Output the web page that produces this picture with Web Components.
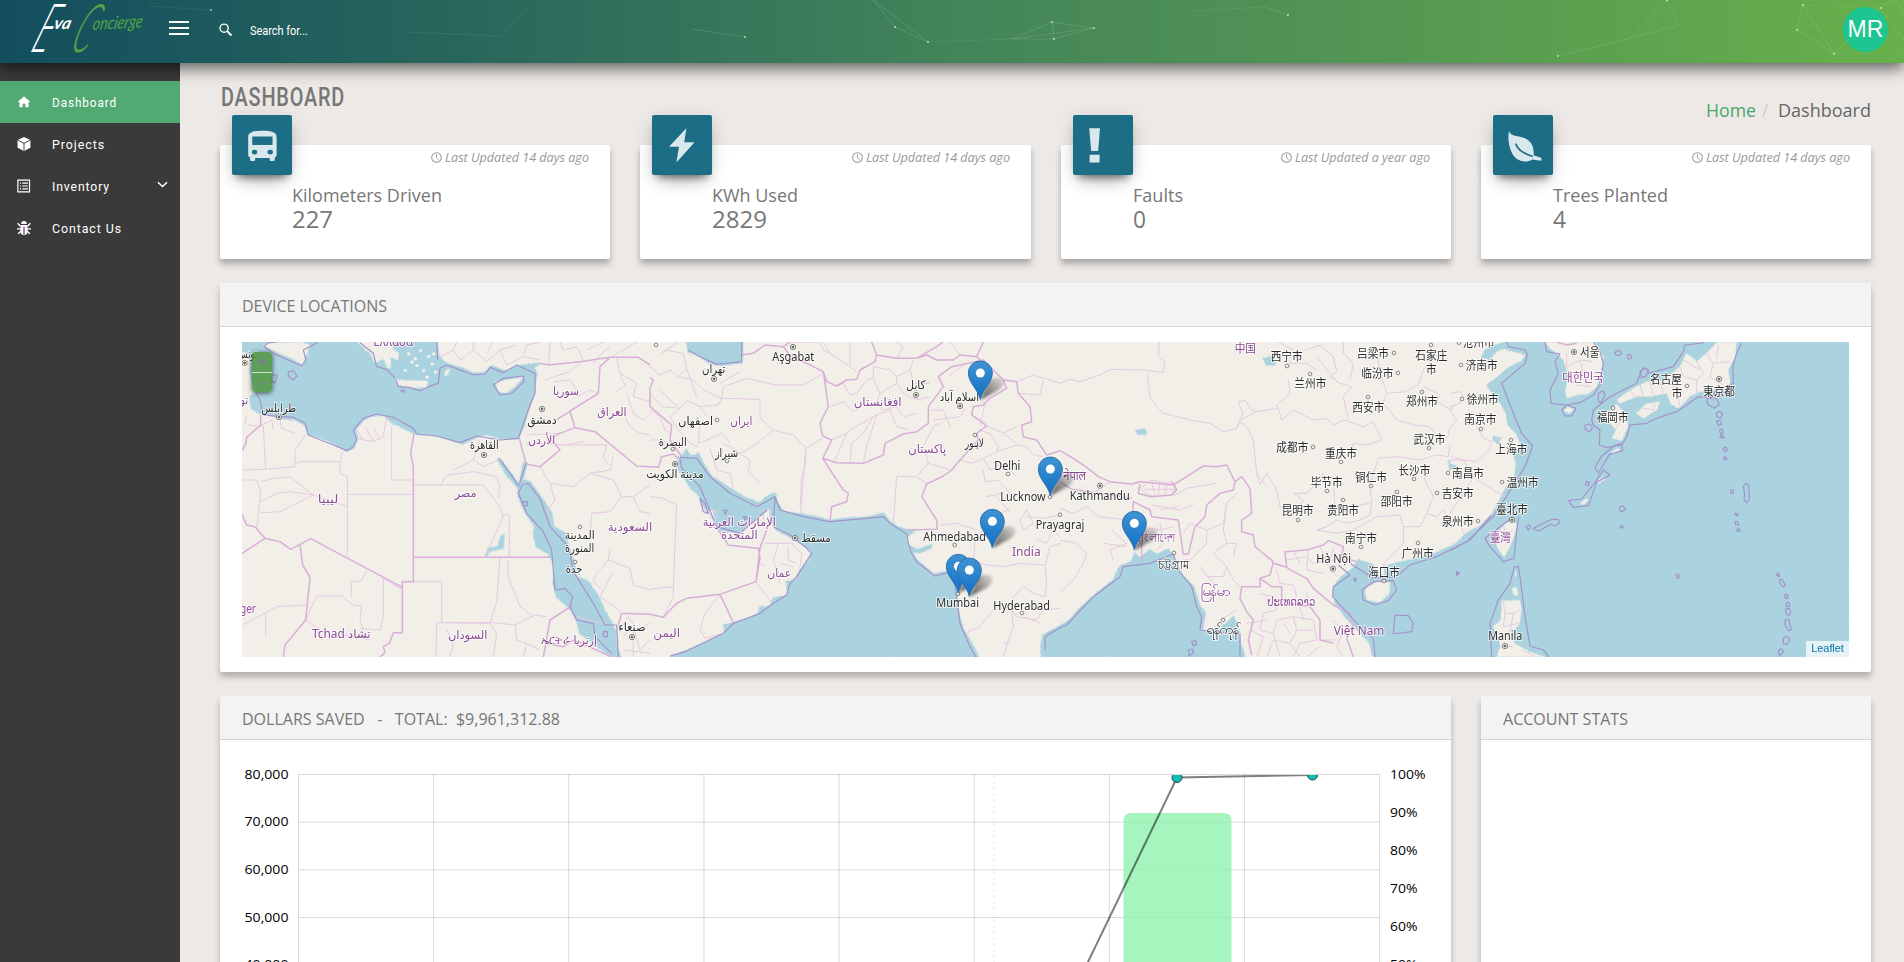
<!DOCTYPE html>
<html lang="en">
<head>
<meta charset="utf-8">
<title>Eva Concierge</title>
<style>
html,body{margin:0;padding:0;height:100%;overflow:hidden;background:#ece9e6;font-family:"Open Sans","Noto Sans",sans-serif}
</style>
</head>
<body>
<eva-app></eva-app>
<script>
const define = (name, css, html, init) => customElements.define(name, class extends HTMLElement {
  connectedCallback() {
    if (this.shadowRoot) return;
    const root = this.attachShadow({mode: 'open'});
    const h = typeof html === 'function' ? html(this) : html;
    root.innerHTML = '<style>' + css + '</style>' + h;
    if (init) init(this, root);
  }
});
const A = (el, n, d = '') => el.getAttribute(n) ?? d;

/* One line of text set to a fixed measure */
define('fit-text', ':host{display:block;flex:none}svg{display:block;overflow:visible}', el => {
  const w = +A(el, 'w'), s = +A(el, 's'), f = A(el, 'f', 'Open Sans');
  return `<svg width="${w}" height="${Math.round(s * 1.2)}"><text x="0" y="${Math.round(s)}" textLength="${w}" lengthAdjust="spacingAndGlyphs" fill="currentColor" style="font:${A(el, 'st')} ${A(el, 'wt', '400')} ${s}px '${f}',sans-serif;letter-spacing:${A(el, 'ls', '0')}px;white-space:pre">${A(el, 't')}</text></svg>`;
});

const ICONS = {
  home: '<path d="M12 2 1 12h3.2v9h5.6v-6.2h4.4V21h5.6v-9H23z"/>',
  cube: '<path d="M12 0 23 5v13.500L12 24 1 18.500V5z"/><path d="M1.500 5.500 12 10.800l10.500-5.300M12 10.800V23.500" stroke="#3a3a3a" stroke-width="1.600" fill="none"/>',
  list: '<path d="M1.500 2h20v20h-20z" fill="none" stroke="currentColor" stroke-width="2"/><path d="M5 6h2v2H5zm4 0h10v2H9zM5 11h2v2H5zm4 0h10v2H9zM5 16h2v2H5zm4 0h10v2H9z"/>',
  bug: '<path d="M7 5a5 5 0 0 1 10 0z"/><path d="M6 7h12v11a6 6 0 0 1-12 0z"/><path d="M1 4l5 5M23 4l-5 5M0 13.500h24M2 22l5-5M22 22l-5-5" stroke="currentColor" stroke-width="2.500" fill="none"/><path d="M12 10v13" stroke="#8b3f8e" stroke-width="2.200"/>',
  bus: '<g transform="translate(-1.600 0) scale(1.160 1.040)"><path d="M5 1.500C7 .3 17 .3 19 1.500c2.300 1 2.800 2 2.800 4v14c0 .9-.8 1.500-1.300 1.600V23c0 1.200-3.500 1.200-3.500 0v-1.500H7V23c0 1.200-3.500 1.200-3.500 0v-1.900c-.5-.1-1.300-.7-1.300-1.600v-14c0-2 .5-3 2.800-4z"/><path d="M5 5h14v6.500H5z" fill="#1c6e87"/><circle cx="6.600" cy="17" r="1.900" fill="#1c6e87"/><circle cx="17.400" cy="17" r="1.900" fill="#1c6e87"/></g>',
  bolt: '<path d="M15.500-1.500 1.600 13.300h8L7.500 26 22 9.800h-8.200z"/>',
  bang: '<path d="M1-1.500h8.600l-1.500 18.300H2.500z"/><path d="M1.300 19.800h8v6.200h-8z"/>',
  leaf: '<g transform="translate(-.9 0) scale(1.090)"><path d="M1.500 1c1.500 3.500 5 3.200 10 4.500 6 1.700 8.500 6 8.200 13l5.300 1.800c.6.300.6 2-.2 2.300l-6.100-.9c-5 3-11.700 1.300-14.700-4.200C1.500 12.500.5 6.500 1.500 1z"/><path d="M6.500 10c2 5.500 7 7.500 12.500 9.500" fill="none" stroke="#1c6e87" stroke-width="1.200"/></g>',
  clock: '<circle cx="12" cy="12" r="10.500" fill="none" stroke="currentColor" stroke-width="2.200"/><path d="M12 5v7.500l4.500 4" fill="none" stroke="currentColor" stroke-width="2"/>',
  search: '<circle cx="9.500" cy="9.500" r="7.500" fill="none" stroke="currentColor" stroke-width="2.600"/><path d="M15 15l8 8" stroke="currentColor" stroke-width="3.600"/>',
  down: '<path d="M2 7l10 9.500L22 7" fill="none" stroke="currentColor" stroke-width="3.200"/>'
};
define('ui-icon', ':host{display:block;flex:none}svg{display:block;overflow:visible}', el =>
  `<svg width="${A(el, 's')}" height="${A(el, 's')}" viewBox="0 0 24 24" fill="currentColor">${ICONS[A(el, 'n')]}</svg>`);

/* Header */
define('brand-logo', ':host{display:block;width:139px;height:63px;flex:none}svg{display:block;overflow:visible}text{font-family:Lato,sans-serif;font-style:italic}', `
<svg width="139" height="63">
 <g fill="#fff">
  <text transform="translate(29 52) skewX(-23)" textLength="17" lengthAdjust="spacingAndGlyphs" font-size="68" style="font-weight:300">E</text>
  <text transform="translate(53 29) skewX(-14)" textLength="17" lengthAdjust="spacingAndGlyphs" font-size="17" style="font-weight:700">va</text>
 </g>
 <g fill="#54a447">
  <text transform="translate(68 52) skewX(-23)" textLength="19" lengthAdjust="spacingAndGlyphs" font-size="67" style="font-weight:300">C</text>
  <text transform="translate(92 30) rotate(-3) skewX(-12)" textLength="50" lengthAdjust="spacingAndGlyphs" font-size="18">oncierge</text>
 </g>
</svg>`);
define('user-avatar', ':host{display:flex;width:45px;height:45px;border-radius:50%;background:#1dc690;align-items:center;justify-content:center;color:#fff;font:23px "Liberation Sans",sans-serif;margin:7px 16px 11px auto;flex:none;position:relative}', '<slot></slot>');
define('app-header', `
:host{display:block;height:63px;position:relative;z-index:5;background:linear-gradient(90deg,#134e5e,#26645c 22%,#43845a 50%,#589b51 78%,#68b04b);box-shadow:0 5px 15px rgba(0,0,0,.62)}
.mesh{position:absolute;inset:0;display:block}
.bar{display:flex;height:63px;color:#fff;position:relative}
.burger{width:20px;height:14px;margin:21px 30px 0;display:flex;flex-direction:column;justify-content:space-between}
.burger i{display:block;height:2px;background:#fff}
ui-icon{margin-top:23px}
.q{margin:21px 0 0 18px}`, `
<svg class="mesh" width="1904" height="63" fill="none" stroke="#c8efc0" stroke-opacity=".22" stroke-width=".7">
<path stroke-opacity=".12" d="M148 6l63 4M408 32l93 4 29-29M928 42l84-3M1191 11l74-4M1797 30l98-30M1803 5l78 3M1834 54l70-1"/>
<path d="M691 29l54 8M873 0l22 27 33 15M873 0l55 42M1012 39l40-17 42 6-40 11-2-17M1054 39h-42l82-11M1265 7l23 8M1558 56l73-18 48-13-12-25-36 38M1803 5l-6 25 37.500 24L1803 5M1895 0l9 12M1880 8l-46 46M1880 8l13-8M1880 8l24 32"/>
<g fill="#e4f6dd" fill-opacity=".7" stroke="none"><circle cx="211" cy="10" r="1"/><circle cx="745" cy="37" r="1"/><circle cx="895" cy="27" r="1"/><circle cx="928" cy="42" r="1"/><circle cx="1052" cy="22" r="1"/><circle cx="1094" cy="28" r="1"/><circle cx="1054" cy="39" r="1"/><circle cx="1288" cy="15" r="1"/><circle cx="1558" cy="56" r="1"/><circle cx="1667" cy="0" r="1.200"/><circle cx="1803" cy="5" r="1"/><circle cx="1797" cy="30" r="1"/><circle cx="1834" cy="54" r="1"/><circle cx="1881" cy="8" r="1"/></g></svg>
<div class="bar"><brand-logo></brand-logo><div class="burger"><i></i><i></i><i></i></div>
<ui-icon n="search" s="13"></ui-icon><fit-text class="q" w="58" s="13.500" f="Roboto" t="Search for..."></fit-text>
<user-avatar>MR</user-avatar></div>`);

/* Sidebar */
define('nav-item', `
:host{display:flex;height:42px;align-items:center;color:#fff;padding-left:17px}
:host([active]){background:#52a972}
fit-text{margin:-2px auto 0 21px}
.a{margin:-4px 12px 0 0}`, el =>
  `<ui-icon n="${A(el, 'n')}" s="14"></ui-icon><fit-text w="${A(el, 'w')}" s="13.500" f="Roboto" ls="1" t="${A(el, 't')}"></fit-text>` + (el.hasAttribute('more') ? '<ui-icon class="a" n="down" s="11"></ui-icon>' : ''));
define('side-bar', ':host{display:block;width:180px;background:#3a3a3a;padding-top:18px;box-sizing:border-box;flex:none}', `
<nav-item active n="home" w="65" t="Dashboard"></nav-item>
<nav-item n="cube" w="53" t="Projects"></nav-item>
<nav-item more n="list" w="58" t="Inventory"></nav-item>
<nav-item n="bug" w="70" t="Contact Us"></nav-item>`);

/* Cards */
define('stat-card', `
:host{display:block;flex:1;height:114px;background:#fff;border-radius:2px;box-shadow:0 5px 6px rgba(0,0,0,.28);position:relative;color:#777}
.ic{position:absolute;left:12px;top:-30px;width:60px;height:60px;border-radius:2px;background:#1c6e87;color:#d9e8ec;display:flex;align-items:center;justify-content:center;box-shadow:0 12px 20px -10px rgba(0,0,0,.28),0 4px 20px rgba(0,0,0,.12),0 7px 8px -5px rgba(0,0,0,.5)}
.up{display:flex;justify-content:flex-end;gap:3px;padding:5px 21px 0 0;color:#999;height:15px}
.up ui-icon{margin-top:2px}
.t{margin:19px 0 0 72px}.v{margin:-1px 0 0 72px}`, el => `
<div class="ic"><ui-icon n="${A(el, 'n')}" s="30"></ui-icon></div>
<div class="up"><ui-icon n="clock" s="11"></ui-icon><fit-text w="${A(el, 'uw')}" s="12" st="italic" t="${A(el, 'u')}"></fit-text></div>
<fit-text class="t" w="${A(el, 'tw')}" s="18" t="${A(el, 't')}"></fit-text>
<fit-text class="v" w="${A(el, 'vw')}" s="23" t="${A(el, 'v')}"></fit-text>`);
define('panel-card', `
:host{display:block;background:#fff;border-radius:2px;box-shadow:0 5px 6px rgba(0,0,0,.25);color:#777}
.h{height:43px;background:#f3f3f3;border-bottom:1px solid #d3d4d5;border-radius:2px 2px 0 0}
.h fit-text{padding:13px 0 0 22px}`, el => `
<div class="h"><fit-text w="${A(el, 'w')}" s="16" t="${A(el, 't')}"></fit-text></div><slot></slot>`);

/* Map: four drawing groups side by side, three units to a pixel */
const SEA = [
 [0,'M6,36V62L40,75 30,120 38,160 48,190 30,200 35,235 60,250 100,258 125,265 165,268 195,285 205,312 250,325 290,345 320,362 340,355 352,325 345,300 365,275 390,258 430,254 460,280 500,298 530,312 590,316 650,335 668,342 700,325 740,312 780,325 835,325 850,290 865,240 880,195 890,130 880,112 900,100 835,108 800,125 755,108 735,128 700,130 670,115 640,108 610,95 595,75 590,36 455,36 462,55 480,70 475,95 455,85 455,115 440,118 430,90 405,100 390,70 365,50 362,36Z'],
 [0,'M772,385L790,400 838,466 850,400 860,400 848,450 870,455 905,505 935,550 940,590 975,610 985,650 1000,690 1010,740 1045,755 1075,800 1095,845 1110,870 1125,900 1130,950 1142,981H1120L1060,940 1020,910 1010,870 990,835 950,800 940,760 945,710 925,670 890,650 880,610 885,590 855,545 835,500V475L800,435Z'],
 [0,'M735,682L745,655 775,650 785,615 792,615 788,655 750,662Z'],
 [1230,'M85,385L95,378 110,360 120,380 145,370 165,410 185,440 240,475 280,500 330,520 350,500 375,490 380,515 400,545 450,552 500,560 540,572 590,565 650,562 700,550 715,570 740,590 770,600 795,600 765,625 775,645 800,660 845,645 840,655 810,668 785,665 800,690 850,733 890,725 900,700 912,745 918,790 922,840 940,900 965,940 985,981H60L100,965 150,945 225,910 222,885 250,880 300,865 325,850 330,832 360,830 370,805 415,795 410,755 440,750 450,720 480,690 485,665 455,640 420,620 380,600 365,570 360,530 345,545 310,570 270,605 220,605 200,590 195,565 190,530 175,545 160,530 150,500 120,470 100,440 85,415Z'],
 [1230,'M110,36L115,65 145,75 180,100 215,105 275,98 278,36Z'],
 [2460,'M-55,981L-58,950 -50,915 0,888 30,870 60,835 110,790 160,750 180,710 215,695 225,670 240,685 270,660 290,675 325,658 345,690 365,735 400,770 420,830 435,850 430,880 425,905 470,895 500,880 520,860 535,890 540,940 555,981Z'],
 [2460,'M940,981L930,940 895,900 860,865 825,815 820,775 840,745 880,715 895,690 940,705 950,735 975,740 975,710 1010,700 1080,685 1140,665 1190,640 1220,610 1260,590 1295,555 1320,510 1335,480 1365,440 1370,400 1360,370 1385,345 1370,310 1345,285 1340,250 1320,215 1295,185 1280,165 1310,145 1345,115 1385,95 1400,75 1370,65 1330,55 1310,62 1290,85 1265,82 1275,62 1300,50 1335,36H2367V981Z'],
 [2460,'M610,85L640,80 645,102 620,105ZM228,302L255,298 258,312 235,312ZM1165,390L1172,405 1190,410 1170,418Z'],
 [3630,'M130,320L150,325 145,340 132,332Z']
];
const LAND = [
 [0,'M70,45L100,38 185,36 210,45 188,105 160,88 100,62ZM468,150L565,152 560,175 500,170 472,165ZM765,155L790,152 850,140 830,165 800,190 775,185ZM612,125L630,115 625,135 615,138ZM350,36L455,36 458,60 445,118 430,85 405,100 390,70Z'],
 [2460,'M915,775L950,755 990,755 988,790 960,817 920,810Z'],
 [3630,'M285,36L435,36 460,80 455,130 440,170 415,192 380,195 350,205 345,180 355,140 340,90 320,70 300,55ZM340,242L355,230 372,238 358,250ZM480,240L500,222 528,255 535,290 515,332 485,325 498,300 482,282 462,258ZM500,210L540,180 590,155 640,150 690,110 708,70 725,80 740,95 780,60 800,36H860L855,80 835,120 842,165 815,185 785,180 750,185 720,200 685,235 662,222 650,190 600,200 560,200 510,220ZM558,250L590,220 630,215 622,238 580,265ZM190,565L202,590 185,640 162,683 140,650 135,620 160,585ZM155,812L210,810 215,840 208,885 180,912 195,940 240,965 285,981H140L150,950 145,920 128,890 152,870Z'],
 [3630,'M485,365l20,-12 5,8 -20,12ZM440,455l22,-15 3,8 -18,12ZM390,520l20,-15 5,8 -15,12ZM195,720l5,15 -5,5ZM185,775l15,-5 5,25 -12,3Z']
];
/* maritime limits */
const LIM = [
 [0,'M72,50L100,70 185,108 198,90 190,60 235,36M72,50L85,38 110,36M48,190L60,210 70,255 160,262 195,280 205,315 280,345 320,362 340,350 350,328 340,300 370,265 410,252 460,262 520,295 530,312 590,318 660,338 710,318 780,330 835,325 870,225 885,190 885,130 830,105 790,128 750,112 735,132 700,135 655,118 620,105 600,115 595,160 565,170 540,182 505,172 475,170 468,150M360,38L400,70 410,110 440,118 465,145M590,36L593,90M760,165L790,145 850,138 852,155 815,190 780,195ZM145,125L160,123 172,138 158,150 145,138ZM95,135L112,135 105,160 90,150ZM483,180h10v6h-8ZM848,462L835,490 860,550 910,605 935,660 945,780 975,775 998,800 990,830 1010,870 1060,880 1065,920 1115,970M850,462L865,460 900,505 930,590 985,650 1000,725 1060,820 1095,885 1130,885 1135,981M850,515h12v12h-12ZM1090,905h12v15h-12ZM838,462L858,400M778,385L838,470'],
 [1230,'M90,382L140,385 180,440 240,490 320,530 375,500 390,540 460,560 540,575 650,565 700,560 720,580 770,612 775,640 785,670 800,695 855,738 895,728 915,760 930,880 960,950 978,981M375,500L370,590 420,615 465,650 485,670 440,740 420,760 410,795 370,820 330,850 250,880 220,910 105,965 60,978M150,505L165,520 175,550 160,545ZM220,540h12l-6,12ZM280,560h12l-6,10ZM115,60L145,78 200,103 275,95 275,36M90,385L95,415 150,470 200,590 270,610 350,540'],
 [2460,'M-45,960L-45,920 0,893 20,885 100,800 180,740 190,710 270,700 340,672 355,720 395,770 410,830 425,860 420,900 540,912 540,981M835,705L870,735 820,770 818,800 900,890 940,925 945,981M905,780L940,755 1000,752 1010,780 985,812 945,825 910,810ZM870,700L940,745 1010,740 1050,705 1130,680 1230,630 1295,555M1005,855L1045,857 1060,880 1055,905 1000,912ZM395,935l12,-3 3,12 -10,3ZM385,960l12,-3 3,12 -12,8ZM880,745h10l-5,10ZM1190,725l8,4 -6,6Z'],
 [3630,'M170,36L175,50 225,60 232,75 225,100 155,160 190,250 215,310 248,348 225,410 175,490 130,560 50,635 0,662M285,36L290,65 330,72 315,95 325,130 300,180 303,220 350,225 390,218 430,195 450,165 460,100 450,65 430,36M335,240L350,225 378,235 365,258 345,258ZM425,270L430,240 480,200 560,160 575,120 590,115 595,130 670,110 700,65 705,45 750,40 765,36M425,270L430,285 450,300 448,345 470,353 515,345 530,320 540,285 590,280 620,265 680,245 745,200 785,205 795,185 850,160 848,110 860,70 875,40M445,190l15,-8 5,12 -12,25 -8,-5ZM405,285l15,-3 8,12 -10,12 -12,-8ZM515,340l3,22 -40,12 -32,55 -12,-15 20,-35 40,-32ZM460,420l20,15 -40,22 -25,70 -45,5 -15,-20 40,-5 40,-50ZM408,455l10,2 -2,10 -10,-2ZM510,530l10,-2 6,10 -10,8 -8,-6ZM510,594l5,-9 5,8ZM190,560L105,625 120,650 160,695 192,685 200,600 207,560M228,590l8,-6 6,8 -8,8ZM250,595l30,-15 25,-12 20,0 3,12 -15,8 -10,-5 -38,20 -12,-5ZM193,710L205,710 210,740 225,860 240,948 280,960 297,981M193,710L180,760 145,810 120,880 125,981M770,210l8,-10 20,5 10,18 -15,12 -18,-10ZM800,248l10,-4 8,8 -6,12 -12,-4ZM800,272l10,0 5,10 -10,5ZM808,300l8,-4 4,12 -8,4ZM810,322l6,-8 6,10ZM820,355l8,-4 4,10 -8,5ZM820,387l5,-8 6,10ZM842,480l8,0 0,10 -8,0ZM880,470l8,-10 8,6 2,42 -8,10 -8,-8 2,-18ZM855,550l10,2 -5,6ZM855,575l8,0 4,10 -10,0ZM860,602l5,-8 5,10ZM978,735l8,-6 3,10ZM988,750l8,-2 10,18 -6,5 -10,-10ZM1003,795l8,-2 4,10 -8,3ZM1008,820l8,-4 3,12 -10,2ZM1007,838l10,-4 5,12 -4,10 -10,-4ZM1005,870l12,-2 3,20 6,10 -10,4 -10,-14ZM1000,925l10,-6 10,8 -8,16 -12,-2ZM985,962l8,-6 8,8 -12,14ZM677,735l7,-3 6,8 -8,5ZM18,727l9,2 -6,7ZM497,65l12,-5 6,10 -10,8 -10,-6ZM532,75l8,-2 6,10 -10,5ZM570,125l12,-12 14,8 -8,18 -14,4Z']
];
const BORDER = [
 [0,'M6,362L18,340 20,322 62,285V255M522,310L512,370 520,410V755H487V908H460L448,940 430,950 435,968 420,981M522,682H930M6,552L20,585 45,590 75,625 6,670M75,625L120,635 152,658 212,626 487,772M180,645L188,705 210,742 197,870 135,945 130,981M838,325L858,402 900,410 960,360 930,325 960,310 1005,293 990,245 950,268M900,100L925,105 1020,95 1110,82 1195,82 1230,105M1110,82L1080,110 1075,190 990,243 1005,293 1065,305 1190,408 1230,410M910,981L930,870 1000,825M915,940L970,950 1000,930 1070,960 1115,981M1145,850L1230,853M1145,850L1135,885'],
 [1230,'M0,143L10,150 0,175 0,230 65,285 60,330 95,380M0,410L25,412 35,380 70,372 85,385M275,75L310,70 345,45 400,50 420,36M400,50L420,75 520,125 530,155 560,168 590,150 620,148 630,120 675,95 680,75 740,85 800,85 830,75 860,90 910,90 930,75 980,80 1000,100M520,125L535,230 510,280 518,318 545,330 518,385 580,480 595,490 590,515 545,530 540,572M518,385L560,398 640,400 700,375 705,340 760,312 800,305 835,280 835,230 880,170 865,140 905,110 1000,90 1060,150 1070,175 1020,205 1000,225 970,230 965,255 1010,288 980,310 985,330 930,390 905,420 880,438 830,462 815,500 860,570 862,598 770,600M1060,150L1100,155 1105,190 1140,230 1145,275 1115,285 1120,320 1160,330 1190,375 1230,362M680,75L665,36M800,85L860,50 880,36M980,80L1000,36M0,853L40,862 80,820 110,805 210,793 318,755 330,685 325,655 235,645 205,600M210,793L250,878M318,755L330,655 350,600'],
 [2460,'M0,362L40,385 80,412 115,440 150,455 215,462 240,455 340,465 380,440 430,408 470,410 500,405 525,455 520,480 480,490 440,525 435,560 405,590 385,672 370,672 360,605 355,570 275,560 270,540 220,515 218,550 245,580 245,695M525,455L545,440 570,475 575,550 545,570 545,605 580,615 585,650 640,695 630,735 600,745 600,770 545,770 540,805 560,845 580,870 565,930 575,975M640,700L680,712 675,665 740,660 790,645 805,632 850,650 845,680 890,695M680,712L700,725 740,745 760,775 820,825 870,850 880,890 860,925 880,981M600,745L635,770 665,770 665,825 700,820 750,830 780,870 780,930 820,940M240,462L235,490 270,500 335,495 350,480 335,455M0,455L35,478 215,505'],
 [3630,'M320,36L350,45 380,40']
];
const STATE = [
 [0,'M6,450L50,450M50,450L62,485 50,600 75,625M6,420L77,418 70,290 25,285M77,418L165,410 165,360 200,310M165,400L180,395 300,395 308,365M300,395L300,430 322,440V680M322,493H520M322,530L220,495 120,545 65,548M62,515L110,490 150,485 220,495 150,440 100,445 62,455M455,290V450H520M524,465H730L780,530 790,560 735,680M808,682V555H783M602,465L620,435 700,425 770,440 780,470 775,505M640,420L700,390 720,330M700,390L730,410 775,390M345,320L370,330 400,335 430,320 440,255M370,330L350,300M400,335L375,290M420,330L400,290M780,682L770,815 750,880 590,878 588,981M520,755H605V875M602,878H760L825,885 885,855 920,860M803,690L805,740 840,830 880,860M487,780L430,745V860L420,900M6,885L77,848 110,830 197,825M77,848V920M197,870L240,900 245,930M197,870L230,798H305L340,825 365,828 360,870 370,900M333,800L335,755 365,752 380,720M360,895L420,900M270,930L285,910 390,930M860,345L910,340 975,345 1100,345 1090,380 1105,405M860,315L960,310M975,345L1030,335M900,410L930,460 1000,470 1050,430 1110,420 1120,380M1050,430L1120,450 1145,500 1180,500 1230,465M1145,500L1110,545 1055,550 1050,610M930,460L945,510 920,545 940,575M1180,500L1200,545 1230,550M1110,660L1105,690 1070,730 1060,755 1085,780M1105,690L1170,715 1180,765 1230,780M1120,725L1080,800 1130,835 1145,850M915,150L990,125 1020,100M1010,180L990,150 940,155M1075,190L1050,180 1010,200M1140,135L1155,165 1130,185M1160,190L1180,250 1210,270 1230,250M1130,85L1140,130 1190,160 1180,200 1230,215M1150,250L1170,290 1200,310 1230,315M600,80L640,60 660,90 700,60 740,95 780,60 800,105 850,80 900,90M640,60L650,36M700,60L700,36M740,70L760,36M850,80L860,45 900,36M780,60L830,45M930,36L925,105M960,36L970,60 1010,50 1030,90M1040,60L1090,36M1110,82L1150,60 1190,36M1060,100L1085,70 1110,50M620,900L640,940 630,981M750,880L770,910 760,981M825,885L830,930 860,940 850,981M860,940L900,960M1010,860L1040,870 1100,880M1145,890L1165,860 1190,900 1230,880M1150,920L1180,890 1200,960 1230,930M1150,960L1230,970M1180,890V981M20,255L15,285M65,285L95,270 100,300M120,265L125,295 165,310'],
 [1230,'M45,60L100,70 110,115 85,140 60,120 30,135 0,110M85,140L130,150 160,180 215,205 330,208V265L370,300 345,320 300,355 270,370 240,350 215,340M215,205L220,170 290,145 375,165 460,165 520,130M210,160L270,125M370,300L430,315 467,355 452,552M467,355L518,325M467,355V400L455,440 450,530M110,210L90,235 35,230 0,190M110,210L150,230 205,225 215,205M150,270L145,340 170,330 215,310 240,340M180,355L200,420 240,430 250,475M270,370L300,390 295,425 330,460M150,230L170,260M85,300L60,260 90,235M85,300L120,340 145,350M0,330L40,330 60,355M110,115L140,200M30,180L60,210 85,230M35,70L85,36M420,36L510,36L520,60 540,70 600,110 620,125M545,330L590,310 600,300 670,260 680,255 650,350 640,400M590,310L555,390M670,260L640,310 605,340 600,398M680,255L720,240 740,290 780,300M540,230L580,215 610,245 625,235M560,168L580,160 600,195 620,190M620,190L650,150 670,145 690,190 740,160 760,190M670,145L670,110 720,120 740,140 780,120 790,160 840,160M740,160L740,140M700,240L740,230 760,260 800,250M760,190L800,210 840,200M780,120L790,90M690,190L680,220 700,240M840,240L880,240 900,290M850,270L930,260 945,235M835,400L905,420M835,400L820,350 850,290 870,280M835,400L800,440 740,440 730,580M800,440L830,462M930,390L965,400 1000,385 1040,365 1100,345 1130,350 1150,375 1180,380M1000,420L1005,455 1045,450 1080,490 1100,490M1000,385L1020,420 1060,400 1100,440M1040,365L1045,350 1020,310 985,300M1010,288L1060,310 1100,340M965,255L1010,280M1060,310L1100,290M1005,220L990,290M1040,500L1075,540 1020,560 1000,600 975,640 970,690 1010,705 1060,710 1110,700 1185,705 1190,760 1185,800M870,585L920,580 980,600M1080,550L1075,540M1120,600L1110,570 1130,540 1150,580 1120,600M1130,560L1180,565 1230,555M1160,630L1190,640 1210,600 1230,620M1185,705L1200,650 1230,640M1185,800L1150,790 1120,770 1090,800 1085,840 1100,860M1030,840L1005,870 990,890 955,905 950,930M1085,840L1090,890 1075,930 1060,981M1100,860L1160,870 1180,840 1230,835M1120,860L1170,880M1060,940L1080,940M970,700L920,740M0,500L40,505 80,525 70,770 0,778M70,770L70,800 40,862M150,900L165,850 210,793M150,900L165,925 220,910M385,640L370,690 390,760M415,650L415,690 440,700M345,640L375,640 430,640M390,700L430,710M425,640L455,670 450,710M330,700L345,710M318,755L365,820M0,240L30,260 45,300 60,310M180,540h20v25h-18ZM340,540h20v40h-20ZM600,110L600,36M540,70L520,36M740,85L760,50 740,36M930,75L900,36M1100,155L1150,135 1230,160M1105,190L1170,195 1180,150M895,140L940,105M1010,500L1060,490'],
 [2460,'M0,160L30,148 60,155 120,135 150,118 250,120 310,128 315,95 295,80 298,36M262,130L270,205 310,250 400,272 450,280 490,305 530,295 540,275 560,290 580,330 590,430M530,295L548,250 535,215 555,210 575,240 590,245 655,235 650,225 690,190 685,150M540,270L590,245M655,235L665,270 700,240 760,270 800,265 820,285 850,270 910,290 940,275 965,330 920,345 880,340 870,380M840,160L875,170 850,200 865,270M655,36L700,60 690,70 690,100 740,100 770,120M735,60L780,45 820,80 830,125 810,140 840,160M770,80L830,155M850,36L850,70 880,100 870,150M950,60L960,130 980,190 970,220 1010,270 1060,285 1110,290 1140,330 1165,320M980,190L1035,185 1075,165 1090,120 1125,80M1090,170L1140,195 1130,215 1175,240 1180,225M1165,320L1165,300 1190,270 1170,240M940,430L955,385 1010,380 1080,390 1130,375 1165,380 1170,345M940,430L930,470 935,520 930,555 900,570 860,580 830,570 800,590 775,600M820,440L825,540 870,530 930,520M590,430L600,465 620,430 650,480 660,530 710,545 730,510 700,490 740,490 770,460 790,430M590,430L620,470M800,590L770,600 830,610 880,600 950,560 1020,555 1030,590 1080,590 1100,550 1130,560M1030,590L1030,640 980,690 960,720M1100,550L1120,500 1095,450 1090,400M1130,560L1150,540 1180,590M340,498L380,475 470,460M275,525L360,540 400,525M300,540L355,530M300,580L310,640 290,660M245,590L300,600 340,590M155,600L200,640 150,660 160,690M130,640L200,650M0,630L50,640 80,670 70,700 40,750 0,790M0,535L40,550 80,530 115,560 200,570 245,560M370,610L390,580 440,600 490,580 500,520 530,490M440,600L440,640 390,690 370,690M500,520L490,600 500,640 460,670 500,710 520,750 540,770M440,740L490,740 500,710M150,455L100,490 60,480M530,840L480,870M520,680L530,640 500,640M420,710L460,760M650,720L660,760 700,765 710,800M680,690L740,680 760,700 820,690M700,665L720,700M745,660L740,720 790,730M780,650L800,700 830,740M820,655L810,690M600,790L640,800 650,840 610,850 600,900 640,910 650,870 700,860 710,900 690,940 640,930 620,981M560,880L620,870M640,910L660,981M700,860L760,870 770,930 720,940 700,981M690,940L720,981M760,900L710,900M570,900L610,920 590,981M780,950L740,981M820,870L850,900 830,950 850,981M780,930L830,930M670,880L690,910M740,790L750,830M720,830L730,870'],
 [2460,'M255,465q15,-20 35,-12t40,5q25,5 12,25t-30,12q-30,10 -55,-5t-2,-25ZM275,455L285,495M300,455L295,495M320,460L315,495M255,478H345'],
 [3630,'M0,190L30,185 40,200M40,200L30,220 0,230M80,290L100,325 125,335 120,355 100,375 80,395 40,390 0,390M0,380L40,390 70,440 100,460 130,480 165,500M125,335L160,320M70,440L40,490 0,550M30,580L45,620M350,70L350,110 390,90 430,95M390,90L400,130 430,130M350,110L370,160M380,165L425,170M540,180L560,205M570,165L580,200M600,155L610,195M630,155L640,190M650,150L680,180 690,230M690,110L700,140 740,150 740,190M740,95L760,130 740,150M770,70L790,100 840,95M790,100L780,140 820,165M805,45L800,85M500,240L515,270 495,300M580,235L610,240 615,220M150,600L170,610 190,600M145,640L175,630M160,585L175,640M160,815L165,850 190,850 210,840M165,850L160,890 205,880M190,850L180,905M150,950L190,950M215,960L260,981M700,90L750,120']
];
const LABELS = [
 ['تونس',22,85,60,0],['تو',12,222,26,1],['طرابلس',116,245,104,0],['Ελλάδα',460,47,120,1],['ليبيا',264,520,62,1],['مصر',677,502,66,1],['القاهرة',733,358,86,0],['دمشق',906,282,88,0],['سوريا',978,195,78,1],['العراق',1116,257,88,1],['الأردن',905,342,82,1],['السعودية',1170,603,134,1],['المدينة',1019,628,90,0],['المنورة',1019,667,88,0],['جدة',1002,730,50,0],['ger',24,850,48,1],['Tchad تشاد',304,923,176,1],['السودان',683,926,118,1],['ኤርትራ إرتريا',987,942,168,1],['صنعاء',1176,904,82,0],['اليمن',1280,922,80,1],
 ['تهران',1421,130,70,0],['Aşgabat',1660,93,126,0],['اصفهان',1367,284,104,0],['ایران',1504,285,66,1],['البصرة',1298,347,84,0],['شیراز',1460,382,70,0],['مدينة الكويت',1305,445,172,0],['الإمارات العربية',1498,588,220,1],['المتحدة',1498,628,110,1],['مسقط',1728,636,88,0],['عمان',1618,740,72,1],['افغانستان',1913,227,144,1],['کابل',2028,178,58,0],['اسلام آباد',2158,212,118,0],['پاکستان',2062,370,114,1],['لاہور',2203,352,56,0],
 ['Delhi',2302,420,78,0],['Lucknow',2349,513,136,0],['Ahmedabad',2144,633,188,0],['Prayagraj',2460,598,146,0],['India',2359,678,86,1],['Mumbai',2153,831,128,0],['Hyderabad',2345,839,170,0],['नेपाल',2504,449,68,1],['Kathmandu',2579,510,180,0],['বাংলাদেশ',2746,636,122,1],['চট্টগ্রাম',2801,716,94,0],['မြန်မာ',2925,799,90,1],['ရန်ကုန်',2950,911,96,0],['ປະເທດລາວ',3154,829,144,1],['Hà Nội',3281,699,104,0],['Việt Nam',3357,916,152,1],
 ['中国',3016,69,64,1],['西宁市',3140,94,96,0],['兰州市',3211,174,96,0],['吕梁市',3399,84,96,0],['石家庄',3574,89,96,0],['市',3574,132,32,0],['临汾市',3412,144,96,0],['郑州市',3546,228,96,0],['西安市',3385,245,96,0],['武汉市',3568,342,96,0],['成都市',3157,367,96,0],['重庆市',3303,383,96,0],['毕节市',3260,470,96,0],['铜仁市',3393,455,96,0],['长沙市',3523,435,96,0],['邵阳市',3470,528,96,0],['昆明市',3173,556,96,0],['贵阳市',3309,554,96,0],['南宁市',3363,640,96,0],['广州市',3533,684,96,0],['海口市',3432,742,96,0],
 ['沧州市',3716,50,96,0],['济南市',3725,121,96,0],['徐州市',3728,221,96,0],['南京市',3721,283,96,0],['上海市',3814,373,96,0],['南昌市',3684,445,96,0],['吉安市',3653,505,96,0],['泉州市',3653,589,96,0],['温州市',3848,471,96,0],['臺北市',3816,551,96,0],['臺灣',3781,635,64,1],['서울',4049,81,58,0],['대한민국',4029,156,124,1],['名古屋',4278,162,96,0],['市',4311,205,32,0],['東京都',4437,197,96,0],['福岡市',4118,277,96,0],['Manila',3796,931,102,0]
];
const CAP = [[14,99],[117,261],[732,375],[906,237],[1176,921],[1422,147],[1659,51],[1305,402],[1665,624],[2028,195],[2160,228],[2580,467],[3279,716],[4002,66],[4437,147],[3816,570],[3795,948]];
const TOWN = [[1020,591],[1005,696],[1248,45],[1431,270],[1299,357],[1461,393],[2205,315],[2304,432],[2430,501],[2144,645],[2154,791],[2346,849],[2460,554],[2802,669],[2949,870],[3141,108],[3210,132],[3462,69],[3573,45],[3474,129],[3546,186],[3384,201],[3567,354],[3219,351],[3303,396],[3261,483],[3393,468],[3522,447],[3471,486],[3174,570],[3309,510],[3363,651],[3534,639],[3432,753],[3657,38],[3663,105],[3666,207],[3723,297],[3813,330],[3624,429],[3591,489],[3714,573],[3786,456],[4119,234],[4341,168]];
const PINS = [[2221,210],[2431,498],[2257,655],[2155,790],[2188,801],[2683,661]];
const ISLES = [[500,70],[520,85],[535,60],[560,78],[525,105],[545,120],[570,100],[580,125],[510,95],[555,140],[490,120],[575,70]];
const grp = (a, attr) => `<g ${attr}>` + a.map(([x, d]) => `<path transform="translate(${x} 0)" d="${d}"/>`).join('') + '</g>';
define('world-map', `
:host{display:block;position:relative;height:315px;margin:15px 22px 0;overflow:hidden}
svg{display:block}
.z{position:absolute;left:10px;top:10px;width:20px;height:40px;border-radius:4px;background:rgba(76,147,59,.82);box-shadow:0 1px 5px rgba(0,0,0,.65);display:flex;flex-direction:column;color:#82739b;font:17px/19px "Liberation Sans",sans-serif;text-align:center}
.z span{height:19px;flex:1}.z span+span{border-top:1px solid #d5e4d0}
.l{position:absolute;right:0;bottom:0;width:43px;height:16px;background:rgba(255,255,255,.7);color:#0078a8;font:11px/15px "Liberation Sans",sans-serif;text-align:center;letter-spacing:-.1px}`, () => `
<svg width="1607" height="315" viewBox="6 36 4821 945">
<defs>
<filter id="r" x="0" y="0" width="100%" height="100%"><feTurbulence type="fractalNoise" baseFrequency=".16" numOctaves="2" seed="4"/><feDisplacementMap in="SourceGraphic" scale="7" xChannelSelector="R" yChannelSelector="G"/></filter>
<linearGradient id="p" x1="0" y1="0" x2="0" y2="1"><stop offset="0" stop-color="#3f94d2"/><stop offset="1" stop-color="#126fc6"/></linearGradient>
<filter id="b" x="-30%" y="-30%" width="160%" height="160%"><feGaussianBlur stdDeviation="5"/></filter>
<linearGradient id="s" x1="0" y1="1" x2="1" y2="0"><stop offset="0" stop-color="#000" stop-opacity=".65"/><stop offset="1" stop-color="#000" stop-opacity=".08"/></linearGradient>
</defs>
<rect x="6" y="36" width="4821" height="945" fill="#f2efe9"/>
<g filter="url(#r)">${grp(SEA, 'fill="#aad3df" stroke="#aad3df" stroke-width="5"')}${grp(LAND, 'fill="#f2efe9"')}</g>
<g fill="#f2efe9">${ISLES.map(p => `<path d="M${p[0]},${p[1]}l8,-4 5,7 -9,4z"/>`).join('')}</g>
<g fill="none" stroke-linejoin="round">
${grp(STATE, 'stroke="#e4c9e2" stroke-width="3"')}
${grp(BORDER, 'stroke="#d9afd7" stroke-width="4.500"')}
${grp(LIM, 'stroke="#a493cb" stroke-width="3.600"')}
</g>
<g fill="#f5f2ec" stroke="#555" stroke-width="2">${TOWN.map(c => `<circle cx="${c[0]}" cy="${c[1]}" r="5.500"/>`).join('')}${CAP.map(c => `<circle cx="${c[0]}" cy="${c[1]}" r="8"/><circle cx="${c[0]}" cy="${c[1]}" r="3" fill="#555"/>`).join('')}</g>
<g font-size="36" text-anchor="middle" stroke="#fff" stroke-opacity=".75" stroke-width="6" paint-order="stroke" stroke-linejoin="round" style="font-family:'Noto Sans','DejaVu Sans','Noto Sans CJK SC',sans-serif">${LABELS.map(l => `<text x="${l[1]}" y="${l[2]}" textLength="${l[3]}" lengthAdjust="spacingAndGlyphs" fill="${l[4] ? '#8b4a94' : '#2b2b2b'}">${l[0]}</text>`).join('')}</g>
${PINS.map(([x, y]) => `<g transform="translate(${x} ${y})"><path d="M0,0L25,-60Q50,-72 68,-62 76,-45 52,-28Z" fill="url(#s)" filter="url(#b)"/></g>`).join('')}
${PINS.map(([x, y]) => `<g transform="translate(${x} ${y})"><path d="M0,-2C-8,-34 -36,-52 -36,-81A36,36 0 0 1 36,-81C36,-52 8,-34 0,-2Z" fill="url(#p)" stroke="#2d72ad" stroke-width="3"/><circle cx="0" cy="-81" r="13.500" fill="#fff"/></g>`).join('')}
</svg>
<div class="z"><span>+</span><span>-</span></div><div class="l">Leaflet</div>`);

/* Chart, in pixels from the top-left of the plot card body */
define('savings-chart', ':host{display:block;height:400px;overflow:hidden}svg{display:block}text{font-family:"Open Sans",sans-serif;font-size:13.500px;fill:#000}', () => {
  let g = '', t = '';
  for (let i = 0; i < 9; i++) {
    const x = 78.5 + i * 135.14, y = 34.5 + i * 47.68;
    g += `<path d="M${x} 34.500V400M78.500 ${y}H1159.500"/>`;
    t += `<text x="24.500" y="${y + 4}" textLength="44" lengthAdjust="spacingAndGlyphs">${80 - i * 10},000</text>`;
  }
  for (let i = 0; i < 10; i++) t += `<text x="1170" y="${34.5 + i * 38.14 + 4}" textLength="${i ? 27.5 : 35.5}" lengthAdjust="spacingAndGlyphs">${100 - i * 10}%</text>`;
  return `<svg width="1231" height="400"><defs><clipPath id="c"><path d="M78 35H1160V400H78z"/></clipPath></defs>
<g stroke="#000" stroke-opacity=".15" fill="none">${g}<path d="M774 35V400" stroke-dasharray="3 3" stroke-opacity=".09"/></g>
<path d="M903.500 400V81q0-8 8-8h92q8 0 8 8V400z" fill="#90f2ae" fill-opacity=".8"/>
<g clip-path="url(#c)"><path d="M957 37.500L1092.500 35M957 37.500L868 222 800 360" stroke="#000" stroke-opacity=".5" stroke-width="2" fill="none"/>
<g fill="#0bbfb2" stroke="#1d4340" stroke-width="1"><circle cx="957" cy="37.500" r="5"/><circle cx="1092.500" cy="35" r="5"/></g></g>${t}</svg>`;
});

define('page-head', `
:host{display:flex;height:82px;color:#777}
.t{margin:18px auto 0 1px}
.b{display:flex;margin-top:36px;color:#666}
.h{color:#4aa76d}.s{color:#ccc;margin:0 10px 0 6px}`, `
<fit-text class="t" w="124" s="25" wt="500" f="Roboto" ls="1" t="DASHBOARD"></fit-text>
<div class="b"><fit-text class="h" w="50" s="18" t="Home"></fit-text><fit-text class="s" w="6" s="18" t="/"></fit-text><fit-text w="93" s="18" t="Dashboard"></fit-text></div>`);

define('eva-app', `
:host{display:flex;flex-direction:column;height:962px;overflow:hidden}
.body{display:flex;height:899px}
main{flex:1;padding:0 33px 0 40px}
.row{display:flex;gap:30px}
panel-card{margin-top:24px}
.map{height:389px}.chart{width:1231px;flex:none}.acc{flex:1}`, `
<app-header></app-header>
<div class="body"><side-bar></side-bar><main>
<page-head></page-head>
<div class="row">
<stat-card n="bus" t="Kilometers Driven" tw="150" v="227" vw="41" u="Last Updated 14 days ago" uw="144"></stat-card>
<stat-card n="bolt" t="KWh Used" tw="86" v="2829" vw="55" u="Last Updated 14 days ago" uw="144"></stat-card>
<stat-card n="bang" t="Faults" tw="50" v="0" vw="13" u="Last Updated a year ago" uw="135"></stat-card>
<stat-card n="leaf" t="Trees Planted" tw="115" v="4" vw="13" u="Last Updated 14 days ago" uw="144"></stat-card>
</div>
<panel-card class="map" t="DEVICE LOCATIONS" w="145"><world-map></world-map></panel-card>
<div class="row"><panel-card class="chart" t="DOLLARS SAVED &nbsp; - &nbsp; TOTAL: &nbsp;$9,961,312.88" w="318"><savings-chart></savings-chart></panel-card>
<panel-card class="acc" t="ACCOUNT STATS" w="125"></panel-card></div>
</main></div>`);
</script>
</body>
</html>
